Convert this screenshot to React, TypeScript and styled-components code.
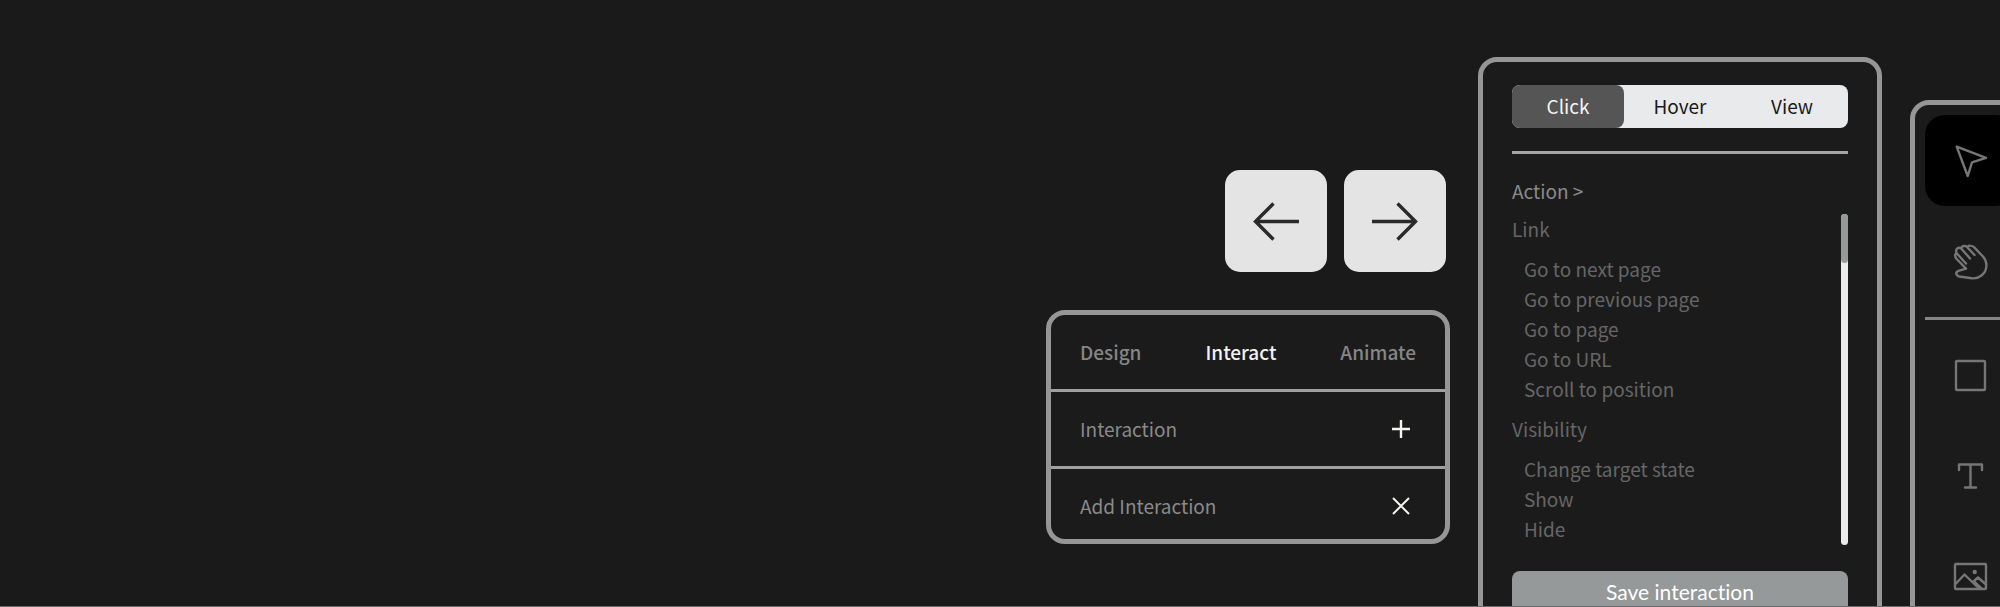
import React from "react";
import styled, { createGlobalStyle } from "styled-components";

const GlobalStyle = createGlobalStyle`
  *, *::before, *::after { box-sizing: border-box; }
  body { margin: 0; background: #1a1a1a; }
  button { font: inherit; color: inherit; background: none; border: 0; padding: 0; cursor: pointer; }
  ul { list-style: none; margin: 0; padding: 0; }
  svg { display: block; }
`;

const Page = styled.main`
  display: flex;
  justify-content: flex-end;
  align-items: flex-start;
  gap: 28px;
  height: 100vh;
  overflow: hidden;
  background: #1a1a1a;
  border-bottom: 1px solid #6b6b6b;
  font-family: "Noto Sans CJK SC", "Noto Sans", sans-serif;
  font-size: 19px;
  line-height: 30px;
`;

const Panel = styled.section`
  flex: none;
  background: #1b1b1b;
  border: 5px solid #969696;
  border-radius: 19px;
`;

const LeftColumn = styled.div`
  display: flex;
  flex: none;
  flex-direction: column;
  gap: 38px;
  width: 404px;
  margin-top: 170px;
`;

const PageArrows = styled.nav`
  display: flex;
  justify-content: flex-end;
  gap: 17px;
  padding-right: 4px;
`;

const ArrowButton = styled.button`
  display: grid;
  place-items: center;
  width: 102px;
  height: 102px;
  border-radius: 15px;
  background: #e4e4e4;
  color: #2a2a2a;
`;

const PanelRow = styled.div`
  display: flex;
  align-items: center;
  justify-content: space-between;
  height: 77px;
  padding: 0 29px;
  color: #8a8a8a;
  border-bottom: 3px solid #a0a0a0;

  &:last-child {
    height: 70px;
    border-bottom: 0;
    padding-top: 4px;
  }
`;

const ModeTab = styled.button<{ $active?: boolean }>`
  font-weight: 500;
  color: ${(p) => (p.$active ? "#f2f2f2" : "#868686")};
`;

const RowAction = styled.button`
  display: grid;
  place-items: center;
  width: 30px;
  height: 30px;
  color: #f4f4f0;
`;

const InteractPanel = styled(Panel)`
  width: 404px;
  margin-top: 57px;
  padding: 23px 29px 29px;
`;

const Segments = styled.div`
  display: flex;
  height: 43px;
  border-radius: 8px;
  background: #e9eaec;
`;

const Segment = styled.button<{ $active?: boolean }>`
  flex: 1;
  padding-bottom: 2px;
  border-radius: 8px;
  background: ${(p) => (p.$active ? "#555555" : "transparent")};
  color: ${(p) => (p.$active ? "#f4f4f4" : "#1a1a1a")};
`;

const Rule = styled.hr<{ $tone?: string }>`
  width: 100%;
  height: 3px;
  margin: 0;
  border: 0;
  background: ${(p) => p.$tone || "#a3a4a4"};
`;

const SegmentRule = styled(Rule)`
  margin: 23px 0 22px;
`;

const ActionHeading = styled.h2`
  margin: 0;
  font-size: inherit;
  font-weight: 400;
  line-height: inherit;
  color: #8a8a8a;
`;

const ActionArea = styled.div`
  display: flex;
  justify-content: space-between;
  height: 331px;
  margin-top: 8px;
`;

const ActionGroup = styled.section`
  color: #666666;

  & + & { margin-top: 10px; }
`;

const GroupTitle = styled.h3`
  margin: 0 0 10px;
  font-size: inherit;
  font-weight: 400;
`;

const ActionItem = styled.li`
  height: 30px;
  padding-left: 12px;
`;

const ScrollTrack = styled.div`
  width: 7px;
  border-radius: 4px;
  background: #ebebec;
`;

const ScrollThumb = styled.div`
  width: 7px;
  height: 49px;
  border-radius: 4px;
  background: #96999a;
`;

const SaveButton = styled.button`
  width: 100%;
  height: 43px;
  margin-top: 26px;
  padding-bottom: 2px;
  border-radius: 8px;
  background: #96999a;
  color: #ffffff;
  font-family: Lato, sans-serif;
  font-size: 21px;
  font-variant-ligatures: none;
`;

const ToolPanel = styled(Panel)`
  display: flex;
  flex-direction: column;
  gap: 10px;
  width: 121px;
  margin-top: 100px;
  margin-right: -31px;
  padding: 10px;
`;

const ToolButton = styled.button<{ $active?: boolean }>`
  display: grid;
  place-items: center;
  width: 91px;
  height: 91px;
  border-radius: 20px;
  background: ${(p) => (p.$active ? "#000000" : "transparent")};
  color: #767676;
`;

const ToolIcon = ({ children }: { children: React.ReactNode }) => (
  <svg width="37" height="37" viewBox="0 0 37 37" fill="none" stroke="currentColor" strokeWidth="2.4" strokeLinecap="round" strokeLinejoin="round" aria-hidden="true">
    {children}
  </svg>
);

const ArrowIcon = ({ d }: { d: string }) => (
  <svg width="48" height="40" viewBox="0 0 48 40" fill="none" stroke="currentColor" strokeWidth="3.4" aria-hidden="true">
    <path d={d} />
  </svg>
);

const actionGroups = [
  { title: "Link", items: ["Go to next page", "Go to previous page", "Go to page", "Go to URL", "Scroll to position"] },
  { title: "Visibility", items: ["Change target state", "Show", "Hide"] },
];

export default function App() {
  return (
    <>
      <GlobalStyle />
      <Page>
        <LeftColumn>
          <PageArrows aria-label="Pages">
            <ArrowButton aria-label="Previous page">
              <ArrowIcon d="M47 20.5H4M21.5 2.5L3.5 20.5L21.5 38.5" />
            </ArrowButton>
            <ArrowButton aria-label="Next page">
              <ArrowIcon d="M1 20.5H44M26.5 2.5L44.5 20.5L26.5 38.5" />
            </ArrowButton>
          </PageArrows>
          <Panel>
            <PanelRow>
              <ModeTab>Design</ModeTab>
              <ModeTab $active>Interact</ModeTab>
              <ModeTab>Animate</ModeTab>
            </PanelRow>
            <PanelRow>
              <span>Interaction</span>
              <RowAction aria-label="New interaction">
                <svg width="18" height="18" viewBox="0 0 18 18" stroke="currentColor" strokeWidth="2.4"><path d="M9 0V18M0 9H18" /></svg>
              </RowAction>
            </PanelRow>
            <PanelRow>
              <span>Add Interaction</span>
              <RowAction aria-label="Close">
                <svg width="18" height="18" viewBox="0 0 18 18" stroke="currentColor" strokeWidth="2"><path d="M1 1L17 17M17 1L1 17" /></svg>
              </RowAction>
            </PanelRow>
          </Panel>
        </LeftColumn>

        <InteractPanel>
          <Segments>
            <Segment $active>Click</Segment>
            <Segment>Hover</Segment>
            <Segment>View</Segment>
          </Segments>
          <SegmentRule />
          <ActionHeading>Action &gt;</ActionHeading>
          <ActionArea>
            <div>
              {actionGroups.map((group) => (
                <ActionGroup key={group.title}>
                  <GroupTitle>{group.title}</GroupTitle>
                  <ul>
                    {group.items.map((item) => (
                      <ActionItem key={item}><button>{item}</button></ActionItem>
                    ))}
                  </ul>
                </ActionGroup>
              ))}
            </div>
            <ScrollTrack><ScrollThumb /></ScrollTrack>
          </ActionArea>
          <SaveButton>Save interaction</SaveButton>
        </InteractPanel>

        <ToolPanel>
          <ToolButton $active aria-label="Select">
            <ToolIcon><path d="M4.7 4.7L34 15.8L20 20.3L15.7 34Z" /></ToolIcon>
          </ToolButton>
          <ToolButton aria-label="Pan">
            <ToolIcon>
              <path d="M14 20.5L4.6 10.2C2.8 11 2.6 13.3 4.2 15.5L14 25.7L6.5 27.8C3.2 29 3.5 32.5 7.3 33.5L19.7 35.3C23 35.6 26 35.3 29.5 32.5C35.5 28 36 19 31 13.5L22 4.2C20 2.4 17 2.4 15 4L22.5 12" />
              <path d="M4.6 10.2C3 6.5 6 3.5 9 5.2L18 15.5" />
              <path d="M9 5.2C9.8 2.6 13.2 2.2 15 4" />
            </ToolIcon>
          </ToolButton>
          <Rule $tone="#858585" />
          <ToolButton aria-label="Rectangle">
            <ToolIcon><rect x="4" y="4" width="29" height="29" rx="1" /></ToolIcon>
          </ToolButton>
          <ToolButton aria-label="Text">
            <ToolIcon><path d="M7 12V6.5H30V12M18.5 6.5V29.5M13 29.5H24" /></ToolIcon>
          </ToolButton>
          <ToolButton aria-label="Image">
            <ToolIcon>
              <rect x="3" y="5" width="31" height="25" rx="1" />
              <path d="M4 24.500L12.500 15.500L27 29.500M21.500 22.500L26 18.500L34 25.500M22 22.500L29.500 29.500" />
              <circle cx="22.700" cy="13" r="1" fill="currentColor" />
            </ToolIcon>
          </ToolButton>
        </ToolPanel>
      </Page>
    </>
  );
}
